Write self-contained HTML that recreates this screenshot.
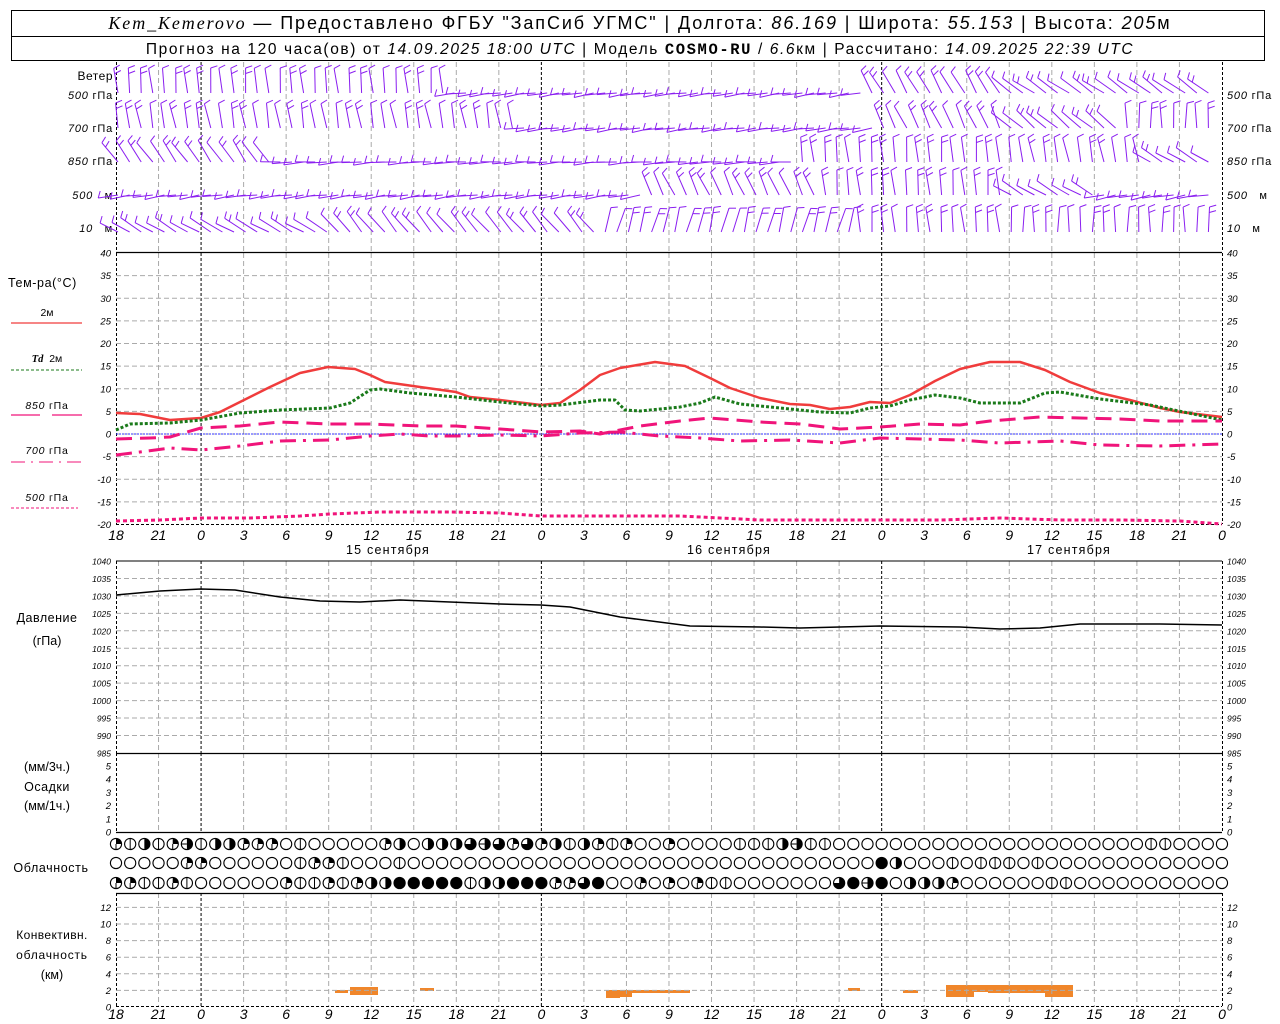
<!DOCTYPE html>
<html><head><meta charset="utf-8">
<style>
html,body{margin:0;padding:0;background:#fff;}
body{width:1280px;height:1024px;overflow:hidden;position:relative;font-family:"Liberation Sans",sans-serif;}
svg{position:absolute;left:0;top:0;}
text{font-family:"Liberation Sans",sans-serif;}
.it{font-style:italic;}
</style></head><body>
<svg id="s" width="1280" height="1024" viewBox="0 0 1280 1024" xmlns="http://www.w3.org/2000/svg">
<rect x="11.5" y="10.5" width="1253" height="50" fill="none" stroke="#000"/>
<line x1="11" y1="36.5" x2="1265" y2="36.5" stroke="#000"/>
<text x="640" y="29" text-anchor="middle" font-size="18" letter-spacing="1.9"><tspan font-family="Liberation Serif" font-style="italic">Kem_Kemerovo</tspan> — Предоставлено ФГБУ "ЗапСиб УГМС" | Долгота: <tspan font-style="italic">86.169</tspan> | Широта: <tspan font-style="italic">55.153</tspan> | Высота: <tspan font-style="italic">205</tspan>м</text>
<text x="640" y="54" text-anchor="middle" font-size="15.5" letter-spacing="1.6">Прогноз на 120 часа(ов) от <tspan font-style="italic">14.09.2025 18:00 UTC</tspan>  | Модель <tspan font-family="Liberation Mono" font-weight="bold">COSMO-RU</tspan> / <tspan font-style="italic">6.6</tspan>км | Рассчитано: <tspan font-style="italic">14.09.2025 22:39 UTC</tspan></text>
<g id="g"></g>
</svg>
<script>
var S=document.getElementById('g'),h='';
function X(k){return 116+k*14.179;}
function ln(x1,y1,x2,y2,c,w,d){h+='<line x1="'+x1+'" y1="'+y1+'" x2="'+x2+'" y2="'+y2+'" stroke="'+c+'" stroke-width="'+(w||1)+'"'+(d?' stroke-dasharray="'+d+'"':'')+'/>';}
function tx(x,y,t,sz,anc,ex){h+='<text x="'+x+'" y="'+y+'" font-size="'+sz+'" text-anchor="'+(anc||'start')+'" '+(ex||'')+'>'+t+'</text>';}
var cb=[[335,990,13,3],[350,987,28,8],[420,988,14,3],[606,990,14,8],[620,990,12,7],[632,990,58,3],[848,988,12,3],[903,990,15,3],[946,985,14,12],[960,985,14,12],[974,985,14,7],[988,985,60,8],[1045,985,14,12],[1059,985,14,12]];
cb.forEach(function(b){h+='<rect x="'+b[0]+'" y="'+b[1]+'" width="'+b[2]+'" height="'+b[3]+'" fill="#f0862a"/>';});
var panels=[[62,252],[253,524],[561,753],[753,832],[893,1007]];
panels.forEach(function(p){
 for(var k=1;k<26;k++){var x=X(k*3);
  var mid=(k%8==2);ln(x,p[0],x,p[1],mid?'#000':'#aaa',1,mid?'3,2':'5,3');}
 ln(116.5,p[0],116.5,p[1],'#000',1,'3,2');
 ln(1222.5,p[0],1222.5,p[1],'#000',1,'3,2');
});
for(var T=-15;T<=35;T+=5){var y=434-T*4.525;ln(116,y,1222,y,'#aaa',1,'5,3');}
for(var T=-20;T<=40;T+=5){var y=434-T*4.525;tx(111,y+3.5,T,9.5,'end','class="it"');tx(1227,y+3.5,T,9.5,'start','class="it"');}
ln(116,434,1222,434,'#33f',1,'2,1');
for(var P=985;P<=1040;P+=5){var y=561+(1040-P)*3.49;if(P>985&&P<1040)ln(116,y,1222,y,'#aaa',1,'5,3');tx(111,y+3.5,P,8.5,'end','class="it"');tx(1227,y+3.5,P,8.5,'start','class="it"');}
for(var q=0;q<=5;q++){var y=832-q*13.2;tx(111,y+3.5,q,9.5,'end','class="it"');tx(1227,y+3.5,q,9.5,'start','class="it"');}
for(var c=0;c<=12;c+=2){var y=1007-c*8.3;if(c>0)ln(116,y,1222,y,'#aaa',1,'5,3');tx(111,y+3.5,c,9.5,'end','class="it"');tx(1227,y+3.5,c,9.5,'start','class="it"');}
ln(116,252.5,1222,252.5,'#000',1.2);ln(116,524.5,1222,524.5,'#000',1,'3,2');
ln(116,753.5,1222,753.5,'#000',1.2);ln(116,832.5,1222,832.5,'#000',1.2);
ln(116,893.5,1222,893.5,'#000',1.2);ln(116,1006.5,1222,1006.5,'#000',1,'3,2');
ln(116,561,1222,561,'#000',1);
for(var k=0;k<=26;k++){var t=(18+k*3)%24;var x=X(k*3);tx(x,540,t,14,'middle','class="it"');tx(x,1019,t,14,'middle','class="it"');}
tx(388,554,'15 сентября',12.5,'middle','letter-spacing="1.2"');tx(729,554,'16 сентября',12.5,'middle','letter-spacing="1.2"');tx(1069,554,'17 сентября',12.5,'middle','letter-spacing="1.2"');
function pl(pts,c,w,d){h+='<polyline fill="none" stroke="'+c+'" stroke-width="'+w+'" stroke-linejoin="round" '+(d?'stroke-dasharray="'+d+'"':'')+' points="'+pts.map(function(p){return p.join(',')}).join(' ')+'"/>';}
pl([[116,413],[140,414],[170,420],[201,418],[220,412],[240,402],[270,387],[300,373],[328,367],[355,369],[370,375],[385,382],[420,387],[456,392],[470,397],[500,400],[541,405],[560,403],[580,390],[600,375],[620,368],[655,362],[685,366],[710,378],[730,388],[760,398],[790,404],[810,405],[830,409],[850,407],[870,402],[890,403],[910,395],[935,381],[960,369],[990,362],[1020,362],[1045,370],[1070,382],[1100,393],[1130,400],[1160,408],[1180,412],[1222,417]],'#f03c3c',2.5);
pl([[116,430],[130,424],[170,423],[201,420],[240,413],[280,410],[330,408],[350,403],[370,390],[380,389],[410,393],[456,397],[500,402],[541,406],[560,405],[600,400],[615,400],[625,410],[640,411],[680,407],[700,403],[715,397],[740,404],[780,408],[820,412],[850,413],[870,408],[890,406],[910,400],[935,395],[960,398],[980,403],[1020,403],[1045,393],[1060,392],[1100,399],[1150,405],[1222,420]],'#1a7a1a',3,'3,2');
pl([[116,439],[150,438],[170,437],[201,428],[240,426],[280,422],[330,424],[370,424],[420,426],[456,426],[500,429],[541,432],[580,431],[600,434],[640,426],[680,421],[710,418],[760,422],[800,424],[840,429],[880,427],[920,424],[960,425],[990,421],[1040,417],[1080,418],[1120,419],[1160,421],[1222,421]],'#f0147a',3,'16,8');
pl([[116,455],[140,452],[170,448],[201,450],[240,446],[280,441],[330,440],[370,436],[400,434],[430,436],[456,436],[500,435],[541,436],[580,433],[620,432],[660,436],[700,438],[740,441],[790,440],[840,443],[880,438],[920,439],[960,440],[1000,443],[1060,441],[1100,445],[1160,446],[1222,444]],'#f0147a',3,'16,7,3,7');
pl([[116,521],[160,520],[201,518],[250,518],[300,516],[330,514],[380,512],[450,512],[500,513],[541,516],[600,516],[680,516],[720,518],[760,520],[820,520],[880,520],[940,520],[1000,518],[1060,520],[1120,520],[1180,521],[1222,524]],'#f0147a',3,'4,3');
pl([[116,595],[160,591],[201,589],[235,590],[280,597],[320,601],[360,602],[400,600],[450,602],[500,604],[541,605],[570,607],[620,617],[690,626],[760,627],[800,628],[880,626],[960,627],[1000,629],[1040,628],[1080,624],[1160,624],[1222,625]],'#000',1.5);
ln(11,323,82,323,'#f03c3c',1.2);ln(11,370,82,370,'#1a7a1a',1,'3,2');
ln(11,415,40,415,'#f0147a',1.2);ln(52,415,82,415,'#f0147a',1.2);
ln(11,462,82,462,'#f0147a',1,'14,6,2,6');ln(11,508,78,508,'#f0147a',1,'3,2');
tx(113,80,'Ветер',12,'end','letter-spacing="0.5"');
var wl=[[95,'500','гПа'],[128,'700','гПа'],[161,'850','гПа'],[195,'500','м'],[228,'10','м']];
wl.forEach(function(w){var sp=(w[2]=='м'?'   ':' ');
 h+='<text x="113" y="'+(w[0]+4)+'" font-size="11" letter-spacing="0.8" text-anchor="end" xml:space="preserve"><tspan font-style="italic">'+w[1]+'</tspan>'+sp+w[2]+'</text>';
 h+='<text x="1227" y="'+(w[0]+4)+'" font-size="11" letter-spacing="0.8" xml:space="preserve"><tspan font-style="italic">'+w[1]+'</tspan>'+sp+w[2]+'</text>';});
tx(8,287,'Тем-ра(°С)',12.5,'start','letter-spacing="0.6"');
tx(47,316,'2м',10.5,'middle');
h+='<text x="47" y="362" font-size="10.5" text-anchor="middle" xml:space="preserve"><tspan font-style="italic" font-weight="bold" font-family="Liberation Serif">Td</tspan>  2м</text>';
h+='<text x="47" y="409" font-size="10.5" letter-spacing="0.8" text-anchor="middle"><tspan font-style="italic">850</tspan> гПа</text>';
h+='<text x="47" y="454" font-size="10.5" letter-spacing="0.8" text-anchor="middle"><tspan font-style="italic">700</tspan> гПа</text>';
h+='<text x="47" y="501" font-size="10.5" letter-spacing="0.8" text-anchor="middle"><tspan font-style="italic">500</tspan> гПа</text>';
tx(47,622,'Давление',12.5,'middle','letter-spacing="0.5"');tx(47,645,'(гПа)',12.5,'middle');
tx(47,771,'(мм/3ч.)',12.5,'middle');tx(47,791,'Осадки',12.5,'middle','letter-spacing="0.5"');tx(47,810,'(мм/1ч.)',12.5,'middle');
tx(51,872,'Облачность',12.5,'middle','letter-spacing="0.6"');
tx(52,939,'Конвективн.',12,'middle','letter-spacing="0.4"');tx(52,959,'облачность',12,'middle','letter-spacing="0.8"');tx(52,979,'(км)',12.5,'middle');
var R=['QLHLQELHHQQQOLOOOOOQHOHHHTETQTQHLHQLQOOQOOOOLLLHELLOO'+'OOOOOOOOOOOOOOOOOOOO'+'LLOOOO',
'OOOOOQQOOOOOOLQQLOOOLOOOOOOO'+'OOOOOOOOOOOOOOOOOOOOOOOOOO'+'FHOOOLOLLLOL'+'OOOOOOOOOOOOO',
'QQLLQLOOOOOOQLLQLQHHFFFFFLHH'+'FFFQQTFOOQOQOQLLOOOOOOOTFE'+'FOHHHQOOOOOOLL'+'OOOOOOOOOOO'];
var ry=[844,863,883],r=5.6;
for(var j=0;j<3;j++){for(var i=0;i<79;i++){var c=R[j][i]||'O',cx=X(i),cy=ry[j];
 h+='<circle cx="'+cx+'" cy="'+cy+'" r="'+r+'" fill="#fff" stroke="#000" stroke-width="1.1"/>';
 if(c=='L')ln(cx,cy-r,cx,cy+r,'#000',1);
 if(c=='Q'){h+='<path d="M'+cx+' '+cy+'L'+cx+' '+(cy-r)+'A'+r+' '+r+' 0 0 1 '+(cx+r)+' '+cy+'Z"/>';ln(cx,cy,cx,cy+r,'#000',1);}
 if(c=='H')h+='<path d="M'+cx+' '+(cy-r)+'A'+r+' '+r+' 0 0 1 '+cx+' '+(cy+r)+'Z"/>';
 if(c=='E'){h+='<path d="M'+cx+' '+(cy-r)+'A'+r+' '+r+' 0 0 1 '+cx+' '+(cy+r)+'Z"/>';ln(cx-r,cy,cx,cy,'#000',1);}
 if(c=='T')h+='<path d="M'+cx+' '+cy+'L'+cx+' '+(cy-r)+'A'+r+' '+r+' 0 1 1 '+(cx-r)+' '+cy+'Z"/>';
 if(c=='F')h+='<circle cx="'+cx+'" cy="'+cy+'" r="'+r+'"/>';
}}
var rows=[[93,[[116,450,-95],[450,870,172],[870,1000,-120],[1000,1222,-145]]],
[128,[[116,520,-100],[520,880,172],[880,1000,-115],[1000,1120,-140],[1120,1222,-90]]],
[162,[[116,280,-125],[280,800,176],[800,1000,-95],[1000,1150,-100],[1150,1222,-150]]],
[195,[[116,650,172],[650,820,-115],[820,1000,-95],[1000,1100,-150],[1100,1222,170]]],
[232,[[116,330,-150],[330,600,-130],[600,850,-75],[850,1000,-95],[1000,1222,-90]]]];
var col='#8a1ef0';
rows.forEach(function(rw){var by=rw[0];
 for(var x=118;x<1220;x+=11.6){
  var a=null;rw[1].forEach(function(s){if(x>=s[0]&&x<s[1])a=s[2];});
  if(a===null)continue;
  a+=Math.sin(x*0.37+by)*5;
  var hor=Math.abs(a)>150;
  var L=hor?20:25,rad=a*Math.PI/180;
  var x2=x+L*Math.cos(rad),y2=by+L*Math.sin(rad);
  h+='<line x1="'+x.toFixed(1)+'" y1="'+by+'" x2="'+x2.toFixed(1)+'" y2="'+y2.toFixed(1)+'" stroke="'+col+'" stroke-width="1"/>';
  var nt=hor?1:(Math.sin(x*0.11)>0?2:1);
  for(var t=0;t<nt;t++){var f=1-t*0.22;var px=x+L*f*Math.cos(rad),py=by+L*f*Math.sin(rad);
   var ex,ey;
   if(hor){ex=px+2;ey=py-7;}else{var ra=rad+1.25;ex=px+7*Math.cos(ra);ey=py+7*Math.sin(ra);if(ex<px){ra=rad-1.25;ex=px+7*Math.cos(ra);ey=py+7*Math.sin(ra);}}
   h+='<line x1="'+px.toFixed(1)+'" y1="'+py.toFixed(1)+'" x2="'+ex.toFixed(1)+'" y2="'+ey.toFixed(1)+'" stroke="'+col+'" stroke-width="1"/>';}
 }});
S.innerHTML=h;
</script>
</body></html>
